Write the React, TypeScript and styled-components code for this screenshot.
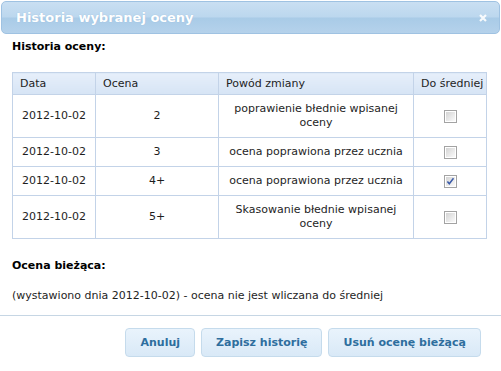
import React from 'react'
import styled, { createGlobalStyle } from 'styled-components'

interface HistoryRow {
    date: string
    grade: string
    reason: string
    counted: boolean
}

const rows: HistoryRow[] = [
    { date: '2012-10-02', grade: '2', reason: 'poprawienie błednie wpisanej oceny', counted: false },
    { date: '2012-10-02', grade: '3', reason: 'ocena poprawiona przez ucznia', counted: false },
    { date: '2012-10-02', grade: '4+', reason: 'ocena poprawiona przez ucznia', counted: true },
    { date: '2012-10-02', grade: '5+', reason: 'Skasowanie błednie wpisanej oceny', counted: false },
]

const Box = ({ checked }: { checked: boolean }) => (
    <svg width="13" height="13" viewBox="0 0 13 13">
        <defs>
            <linearGradient id="cbfill" x1="0" y1="0" x2="1" y2="1">
                <stop offset="0" stopColor="#d4d4d4" />
                <stop offset="1" stopColor="#fafafa" />
            </linearGradient>
        </defs>
        <rect x="0.5" y="0.5" width="12" height="12" fill="#fff" stroke="#a3a3a3" />
        <rect x="2" y="2" width="9" height="9" fill="url(#cbfill)" />
        {checked && <path d="M3.4 6.4 L5.3 8.7 L9.5 3.3" fill="none" stroke="#3a5aa8" strokeWidth="1.5" />}
    </svg>
)

export default function App() {
    return (
        <>
            <GlobalStyle />
            <Dialog>
                <TitleBar>
                    <Title>Historia wybranej oceny</Title>
                    <Close>
                        <svg width="8" height="8" viewBox="0 0 8 8">
                            <path d="M1 1 L7 7 M7 1 L1 7" stroke="#fff" strokeWidth="2.2" />
                        </svg>
                    </Close>
                </TitleBar>
                <Content>
                    <Heading>Historia oceny:</Heading>
                    <Table>
                        <colgroup>
                            <col style={{ width: 83 }} />
                            <col style={{ width: 123 }} />
                            <col style={{ width: 195 }} />
                            <col style={{ width: 73 }} />
                        </colgroup>
                        <thead>
                            <tr>
                                <Th>Data</Th>
                                <Th>Ocena</Th>
                                <Th>Powód zmiany</Th>
                                <Th>Do średniej</Th>
                            </tr>
                        </thead>
                        <tbody>
                            {rows.map((r, i) => (
                                <tr key={i}>
                                    <Td>{r.date}</Td>
                                    <Td>{r.grade}</Td>
                                    <Td>{r.reason}</Td>
                                    <Td>
                                        <Box checked={r.counted} />
                                    </Td>
                                </tr>
                            ))}
                        </tbody>
                    </Table>
                    <Heading $top={20}>Ocena bieżąca:</Heading>
                    <Note>(wystawiono dnia 2012-10-02) - ocena nie jest wliczana do średniej</Note>
                </Content>
                <Footer>
                    <Button>Anuluj</Button>
                    <Button>Zapisz historię</Button>
                    <Button>Usuń ocenę bieżącą</Button>
                </Footer>
            </Dialog>
        </>
    )
}

const GlobalStyle = createGlobalStyle`
    body {
        margin: 0;
        background: #fff;
        font-family: "DejaVu Sans", Verdana, sans-serif;
        font-size: 11px;
        color: #1e1e1e;
    }
`

const Dialog = styled.div`
    width: 501px;
    height: 371px;
    display: flex;
    flex-direction: column;
    background: #fff;
`

const TitleBar = styled.div`
    margin: 1px 1px 0;
    height: 31px;
    display: flex;
    align-items: center;
    justify-content: space-between;
    padding: 0 12px 0 14px;
    border: 1px solid #9fc2e2;
    border-radius: 5px;
    background: linear-gradient(#c9dff2 0%, #bcd7ee 48%, #a9cbe7 52%, #b5d2eb 100%);
`

const Title = styled.span`
    color: #fff;
    font-weight: bold;
    font-size: 13px;
    text-shadow: 0 0 1px #8fb4d6;
`

const Close = styled.span`
    display: flex;
    opacity: 0.9;
`

const Content = styled.div`
    padding: 0 12px;
`

const Heading = styled.div<{ $top?: number }>`
    margin-top: ${p => p.$top ?? 6}px;
    font-weight: bold;
    line-height: 14px;
    color: #000;
`

const Table = styled.table`
    margin-top: 18px;
    width: 475px;
    border-collapse: collapse;
    table-layout: fixed;
    border: 1px solid #c3d3e8;
`

const Th = styled.th`
    height: 21px;
    padding: 0 7px;
    text-align: left;
    font-weight: normal;
    white-space: nowrap;
    border: 1px solid #c3d3e8;
    background: linear-gradient(#e6effa, #d6e4f5);
    color: #1e1e1e;
`

const Td = styled.td`
    padding: 7px 8px;
    line-height: 14px;
    text-align: center;
    border: 1px solid #c3d3e8;
    background: #fff;

    svg {
        display: block;
        margin: 0 auto;
    }
`

const Note = styled.div`
    margin-top: 16px;
    line-height: 14px;
`

const Footer = styled.div`
    margin-top: 12px;
    border-top: 1px solid #c6d6e4;
    padding: 12px 20px 0 0;
    display: flex;
    justify-content: flex-end;
    gap: 6px;
`

const Button = styled.button`
    height: 29px;
    padding: 0 14px;
    border: 1px solid #c5dbec;
    border-radius: 4px;
    background: linear-gradient(#e9f3fc, #d9e9f7);
    color: #2e6e9e;
    font-family: "DejaVu Sans", Verdana, sans-serif;
    font-size: 11px;
    font-weight: bold;
`
